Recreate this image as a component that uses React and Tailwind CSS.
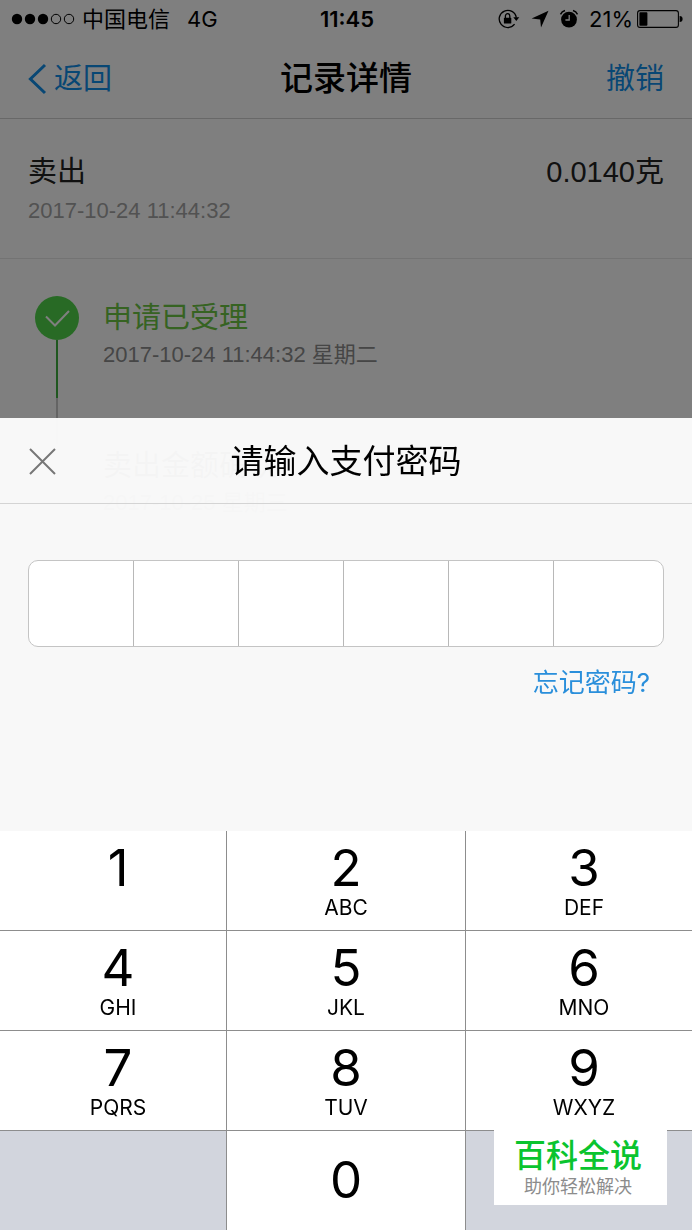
import React from "react";

const KEYS = [
  ["1", ""],
  ["2", "ABC"],
  ["3", "DEF"],
  ["4", "GHI"],
  ["5", "JKL"],
  ["6", "MNO"],
  ["7", "PQRS"],
  ["8", "TUV"],
  ["9", "WXYZ"],
];

function SignalDots() {
  return (
    <svg width="64" height="12" viewBox="0 0 64 12" aria-hidden="true">
      <circle cx="6" cy="6" r="5.2" />
      <circle cx="19" cy="6" r="5.2" />
      <circle cx="32" cy="6" r="5.2" />
      <circle cx="45" cy="6" r="4.7" fill="none" stroke="currentColor" strokeWidth="1" />
      <circle cx="58" cy="6" r="4.7" fill="none" stroke="currentColor" strokeWidth="1" />
    </svg>
  );
}

function RotationLock() {
  return (
    <svg width="22" height="20" viewBox="0 0 22 20" aria-hidden="true">
      <path d="M16.6 15.2A8.6 8.6 0 1 1 18.3 8.6" fill="none" stroke="currentColor" strokeWidth="1.3" />
      <path d="M15.3 8.2h6L18.3 12z" />
      <rect x="5.9" y="8.7" width="7.4" height="5.9" rx="0.7" />
      <path d="M7.4 9V6.9a2.2 2.2 0 0 1 4.4 0V9" fill="none" stroke="currentColor" strokeWidth="1.3" />
    </svg>
  );
}

function LocationArrow() {
  return (
    <svg width="18" height="18" viewBox="0 0 18 18" aria-hidden="true">
      <path d="M17.5.8 10 17.4 9.2 9.4.6 8.6z" />
    </svg>
  );
}

function AlarmClock() {
  return (
    <svg width="20" height="20" viewBox="0 0 20 20" aria-hidden="true">
      <circle cx="10" cy="10.6" r="7.9" />
      <path d="M1.5 5.4Q2.8 2.4 6 1.5M14 1.5q3.2.9 4.5 3.9" fill="none" stroke="currentColor" strokeWidth="1.4" />
      <path d="M10.2 6v5H6.4" fill="none" stroke="#fff" strokeWidth="1.3" />
    </svg>
  );
}

function Battery() {
  return (
    <svg width="46" height="20" viewBox="0 0 46 20" aria-hidden="true">
      <rect x="0.6" y="1.6" width="40.8" height="16.8" rx="2.4" fill="none" stroke="currentColor" strokeWidth="1.1" />
      <rect x="2.4" y="3.2" width="8" height="13.6" rx="0.8" />
      <path d="M42.6 7a3 3 0 0 1 0 6z" />
    </svg>
  );
}

function StatusBar() {
  return (
    <div className="grid h-[38px] grid-cols-[1fr_auto_1fr] items-center pr-[9px] pl-[11px] text-[22px] leading-none text-black">
      <div className="flex items-center">
        <SignalDots />
        <span className="ml-[7px]">中国电信</span>
        <span className="ml-[17px]">4G</span>
      </div>
      <time className="font-semibold">11:45</time>
      <div className="flex items-center justify-end">
        <RotationLock />
        <span className="ml-[11px]"><LocationArrow /></span>
        <span className="ml-[10px]"><AlarmClock /></span>
        <span className="ml-[10px]">21%</span>
        <span className="ml-1"><Battery /></span>
      </div>
    </div>
  );
}

function Record() {
  return (
    <div className="min-h-screen bg-white">
      <StatusBar />
      <header className="grid h-[81px] grid-cols-[1fr_auto_1fr] items-center border-b border-[#d0d0d0] px-7 pt-0.5">
        <button type="button" className="flex items-center gap-[7px] text-[29px] text-[#108ee9]">
          <svg width="19" height="32" viewBox="0 0 19 32" fill="none" stroke="currentColor" strokeWidth="3" aria-hidden="true">
            <path d="M17 2 2.4 16 17 30" />
          </svg>
          返回
        </button>
        <h1 className="text-[33px] font-medium text-black">记录详情</h1>
        <button type="button" className="justify-self-end text-[29px] text-[#108ee9]">撤销</button>
      </header>

      <section className="h-[140px] border-b border-[#e6e6e6] px-7 pt-[33px] font-['Liberation_Sans','Noto_Sans_CJK_SC',sans-serif]">
        <div className="flex justify-between text-[29px] leading-[40px] text-[#222]">
          <span>卖出</span>
          <span>0.0140克</span>
        </div>
        <time className="block text-[22px] leading-[38px] text-[#a5a5a5]">2017-10-24 11:44:32</time>
      </section>

      <ol className="pt-[37px] pl-[35px] font-['Liberation_Sans','Noto_Sans_CJK_SC',sans-serif]">
        <li className="flex min-h-[148px] gap-6">
          <div className="flex w-11 flex-col items-center">
            <svg width="44" height="44" viewBox="0 0 44 44" fill="none" aria-hidden="true">
              <circle cx="22" cy="22" r="22" fill="#50d44b" />
              <path d="m11 20.5 9 9L34 15" stroke="#fff" strokeWidth="2" />
            </svg>
            <div className="h-[58px] w-0.5 bg-[#3fae3f]" />
            <div className="w-0.5 grow bg-[#c8c8c8]" />
          </div>
          <div>
            <h2 className="text-[29px] leading-[44px] text-[#6cc644]">申请已受理</h2>
            <p className="text-[22px] leading-[30px] text-[#8c8c8c]">2017-10-24 11:44:32 星期二</p>
          </div>
        </li>
        <li className="pl-[68px]">
          <h2 className="text-[29px] leading-[44px] text-[#333]">卖出金额确认</h2>
          <p className="text-[22px] leading-[30px] text-[#8c8c8c]">2017-10-25 星期三</p>
        </li>
      </ol>
    </div>
  );
}

function Key({ digit, letters }) {
  return (
    <button
      type="button"
      className="flex h-[100px] flex-col items-center border-b border-[#8d8d8d] bg-white pt-[9px] text-black nth-[3n]:pl-[10px] nth-[3n+1]:pl-[10px] nth-[3n+2]:border-x"
    >
      <span className="text-[51px] leading-[56px]">{digit}</span>
      <span className="text-[21px] leading-6">{letters}</span>
    </button>
  );
}

function PaymentSheet() {
  return (
    <div role="dialog" aria-labelledby="sheet-title" className="fixed inset-x-0 bottom-0 bg-[#fcfcfc]/97">
      <header className="grid h-[86px] grid-cols-[1fr_auto_1fr] items-center border-b border-[#d4d4d4] px-7 pt-0.5">
        <button type="button" aria-label="关闭" className="justify-self-start text-[#777]">
          <svg width="28" height="28" viewBox="0 0 28 28" fill="none" stroke="currentColor" strokeWidth="2" aria-hidden="true">
            <path d="m2 1 25 25M27 1 2 26" />
          </svg>
        </button>
        <h2 id="sheet-title" className="text-[33px] text-black">请输入支付密码</h2>
      </header>

      <form className="px-7 pt-14 pb-[130px]">
        <div className="grid h-[87px] grid-cols-[repeat(5,105fr)_109fr] divide-x divide-[#b8b8b8] overflow-hidden rounded-[10px] border border-[#c4c4c4] bg-white">
          {[1, 2, 3, 4, 5, 6].map((n) => (
            <input
              key={n}
              type="password"
              inputMode="numeric"
              maxLength={1}
              aria-label={`第${n}位密码`}
              className="w-full min-w-0 text-center text-[40px] outline-none"
            />
          ))}
        </div>
        <div className="flex justify-end pt-[18px] pr-[14px]">
          <a href="#forgot" className="text-[26px] leading-9 text-[#2a8fdb]">忘记密码?</a>
        </div>
      </form>

      <div className="grid grid-cols-[226fr_240fr_226fr] bg-[#d2d5dd]">
        {KEYS.map(([digit, letters]) => (
          <Key key={digit} digit={digit} letters={letters} />
        ))}
        <div />
        <button type="button" className="h-[99px] border-x border-[#8d8d8d] bg-white text-[51px] text-black">0</button>
        <div />
      </div>
    </div>
  );
}

export default function App() {
  return (
    <div className="font-['Inter','Noto_Sans_CJK_SC',sans-serif]">
      <Record />
      <div className="fixed inset-0 bg-black/50" />
      <PaymentSheet />
      <aside className="fixed right-[25px] bottom-[25px] bg-white pt-[6px] pr-[25px] pb-[7px] pl-5 text-center">
        <p className="text-[32px] leading-[40px] font-medium text-[#0ac42e]">百科全说</p>
        <p className="text-[18px] leading-[22px] text-[#8c8c8c]">助你轻松解决</p>
      </aside>
    </div>
  );
}
